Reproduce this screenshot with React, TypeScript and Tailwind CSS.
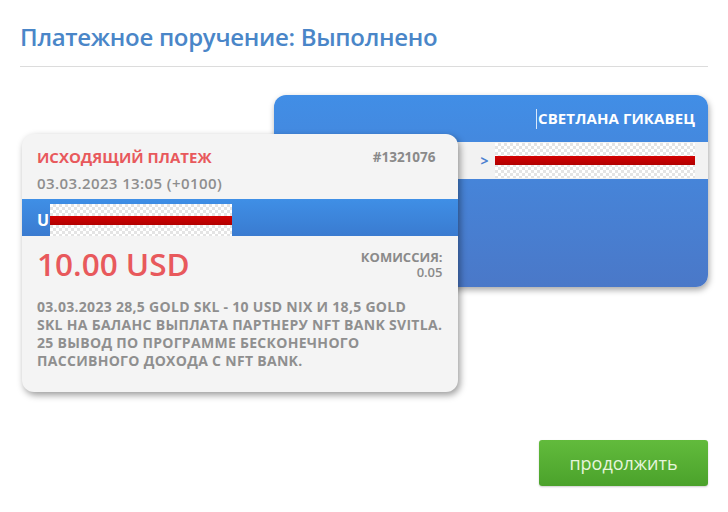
import React from "react";

const checker =
  "bg-[image:repeating-conic-gradient(#e4e4e4_0_25%,#ffffff_0_50%)] bg-size-[6px_6px]";

const DESCRIPTION = [
  "03.03.2023 28,5 GOLD SKL - 10 USD NIX И 18,5 GOLD",
  "SKL НА БАЛАНС ВЫПЛАТА ПАРТНЕРУ NFT BANK SVITLA.",
  "25 ВЫВОД ПО ПРОГРАММЕ БЕСКОНЕЧНОГО",
  "ПАССИВНОГО ДОХОДА С NFT BANK.",
];

function RedactedBar({ className }: { className: string }) {
  return (
    <div className={`${checker} flex items-center ${className}`}>
      <div className="h-[9px] w-full bg-gradient-to-b from-[#d40000] to-[#b00000]" />
    </div>
  );
}

export default function App() {
  return (
    <div className="w-[728px] h-[512px] bg-white px-5 font-['Open_Sans',sans-serif]">
      {/* Header */}
      <div className="pt-[22px] pb-[14px] border-b border-[#dcdcdc]">
        <h1 className="font-semibold text-[24px] leading-[30px] tracking-[-0.3px] text-[#4a86c8]">
          Платежное поручение: Выполнено
        </h1>
      </div>

      {/* Cards */}
      <div className="flex items-start pt-[28px] pl-[2px]">
        {/* Outgoing payment card */}
        <div className="relative z-10 mt-[39px] w-[436px] h-[258px] rounded-[12px] bg-[#f4f4f4] shadow-[2px_3px_7px_rgba(0,0,0,0.4)] overflow-hidden">
          <div className="flex justify-between items-center px-[15px] pt-[12px]">
            <span className="text-[15px] leading-[22px] font-bold text-[#e8595c]">ИСХОДЯЩИЙ ПЛАТЕЖ</span>
            <span className="text-[13.5px] leading-[22px] font-bold text-[#8a8a8a] pr-[7px]">#1321076</span>
          </div>
          <div className="px-[15px] pt-[5px] text-[15px] leading-[20px] font-semibold text-[#8e8e8e] tracking-[0.4px]">03.03.2023 13:05 (+0100)</div>
          <div className="mt-[6px] h-[37px] flex items-end bg-gradient-to-b from-[#3f8fe6] to-[#3a7bd0] pl-[15px]">
            <span className="text-white font-bold text-[16px] leading-[28px] mb-[2px]">U</span>
            <RedactedBar className="w-[182px] h-[32px] ml-[1px] bg-white" />
          </div>
          <div className="flex justify-between items-start px-[15px] pt-[10px]">
            <span className="text-[31.5px] font-semibold leading-[36px] text-[#e8595c]">10.00 USD</span>
            <div className="flex flex-col items-end gap-[1px] text-[13px] font-bold leading-[14px] text-[#8a8a8a] pt-[4px]">
              <span>КОМИССИЯ:</span>
              <span className="font-semibold">0.05</span>
            </div>
          </div>
          <div className="px-[15px] pt-[16px] text-[14px] font-bold leading-[18px] text-[#8f8f8f] tracking-[0.3px]">
            {DESCRIPTION.map((line) => (
              <div key={line} className="whitespace-nowrap">{line}</div>
            ))}
          </div>
        </div>

        {/* Recipient card */}
        <div className="-ml-[184px] w-[435px] h-[192px] rounded-[12px] bg-gradient-to-b from-[#418ee6] to-[#4a78c8] shadow-[1px_3px_6px_rgba(0,0,0,0.35)] overflow-hidden">
          <div className="flex justify-end items-center h-[47px] pr-[13px]">
            <span className="w-px h-[20px] bg-white/80 mr-[1px]" />
            <span className="text-white font-bold text-[15px] tracking-[0.1px]">СВЕТЛАНА ГИКАВЕЦ</span>
          </div>
          <div className="flex items-center h-[37px] bg-[#f2f2f2] pl-[207px] pr-[13px]">
            <span className="text-[#4a80d0] font-bold text-[14px] mr-[6px]">&gt;</span>
            <RedactedBar className="flex-1 h-[35px]" />
          </div>
        </div>
      </div>

      {/* Action */}
      <div className="flex justify-end pt-[48px]">
        <button className="w-[169px] h-[46px] rounded-[3px] bg-gradient-to-b from-[#62bb3c] to-[#4ba22b] text-[#e6f5dc] text-[18px] shadow-[0_1px_2px_rgba(0,0,0,0.2)]">
          продолжить
        </button>
      </div>
    </div>
  );
}
